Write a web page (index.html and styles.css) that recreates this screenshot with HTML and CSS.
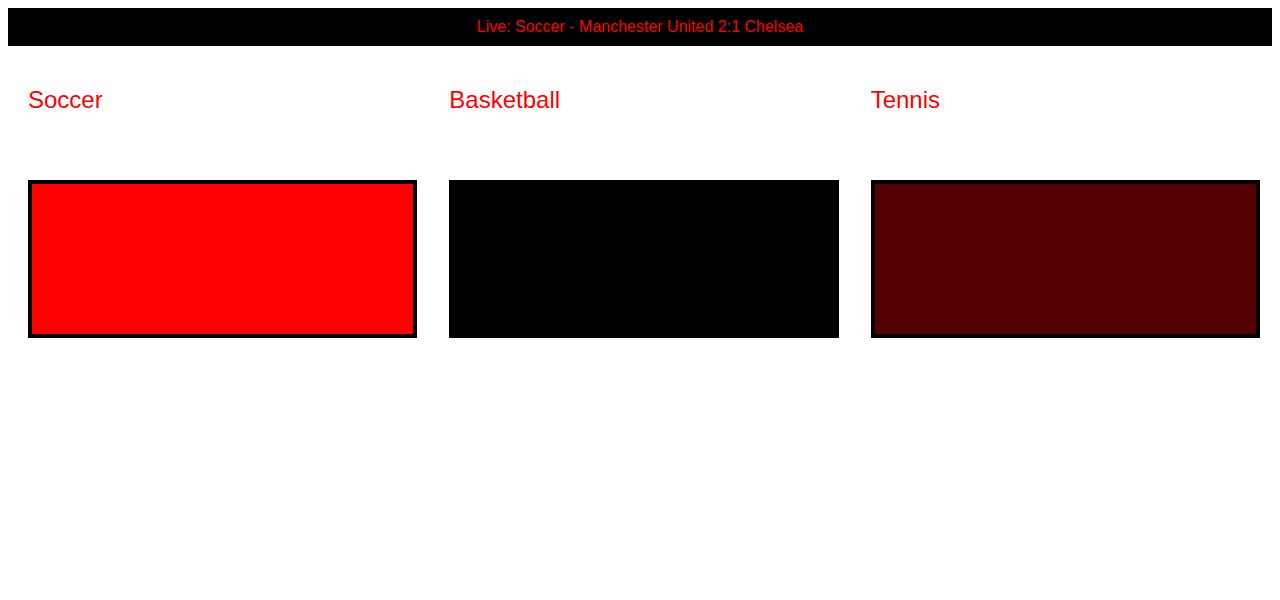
FILE: index.html
```html
<!DOCTYPE html>
<html lang="en">
<head>
	<meta charset="UTF-8">
	<title>Live Scores</title>
	<link rel="stylesheet" href="styles.css">
</head>
<body>
<div class="ticker">Live: Soccer - Manchester United 2:1 Chelsea</div>
<div class="sports">
	<div class="sport">
		<h2>Soccer</h2>
		<div class="panel panel_red"></div>
	</div>
	<div class="sport">
		<h2>Basketball</h2>
		<div class="panel panel_black"></div>
	</div>
	<div class="sport">
		<h2>Tennis</h2>
		<div class="panel panel_dark"></div>
	</div>
</div>
</body>
</html>
```

FILE: styles.css
```css
body{
	margin:8px;
	font-family:"Liberation Sans",Arial,sans-serif;
	background:#fff;
}
.ticker{
	height:38px;
	line-height:38px;
	background:#000;
	color:red;
	font-size:16px;
	text-align:center;
}
.sports{
	display:grid;
	grid-template-columns:1fr 1fr 1fr;
	column-gap:32px;
	padding:20px 12px 0 20px;
}
.sport h2{
	margin:20px 0 0;
	font-size:24px;
	font-weight:normal;
	color:red;
}
.panel{
	height:150px;
	margin-top:66px;
	border:4px solid #000;
}
.panel_red{
	background:red;
}
.panel_black{
	background:#000;
}
.panel_dark{
	background:#550000;
}
```
